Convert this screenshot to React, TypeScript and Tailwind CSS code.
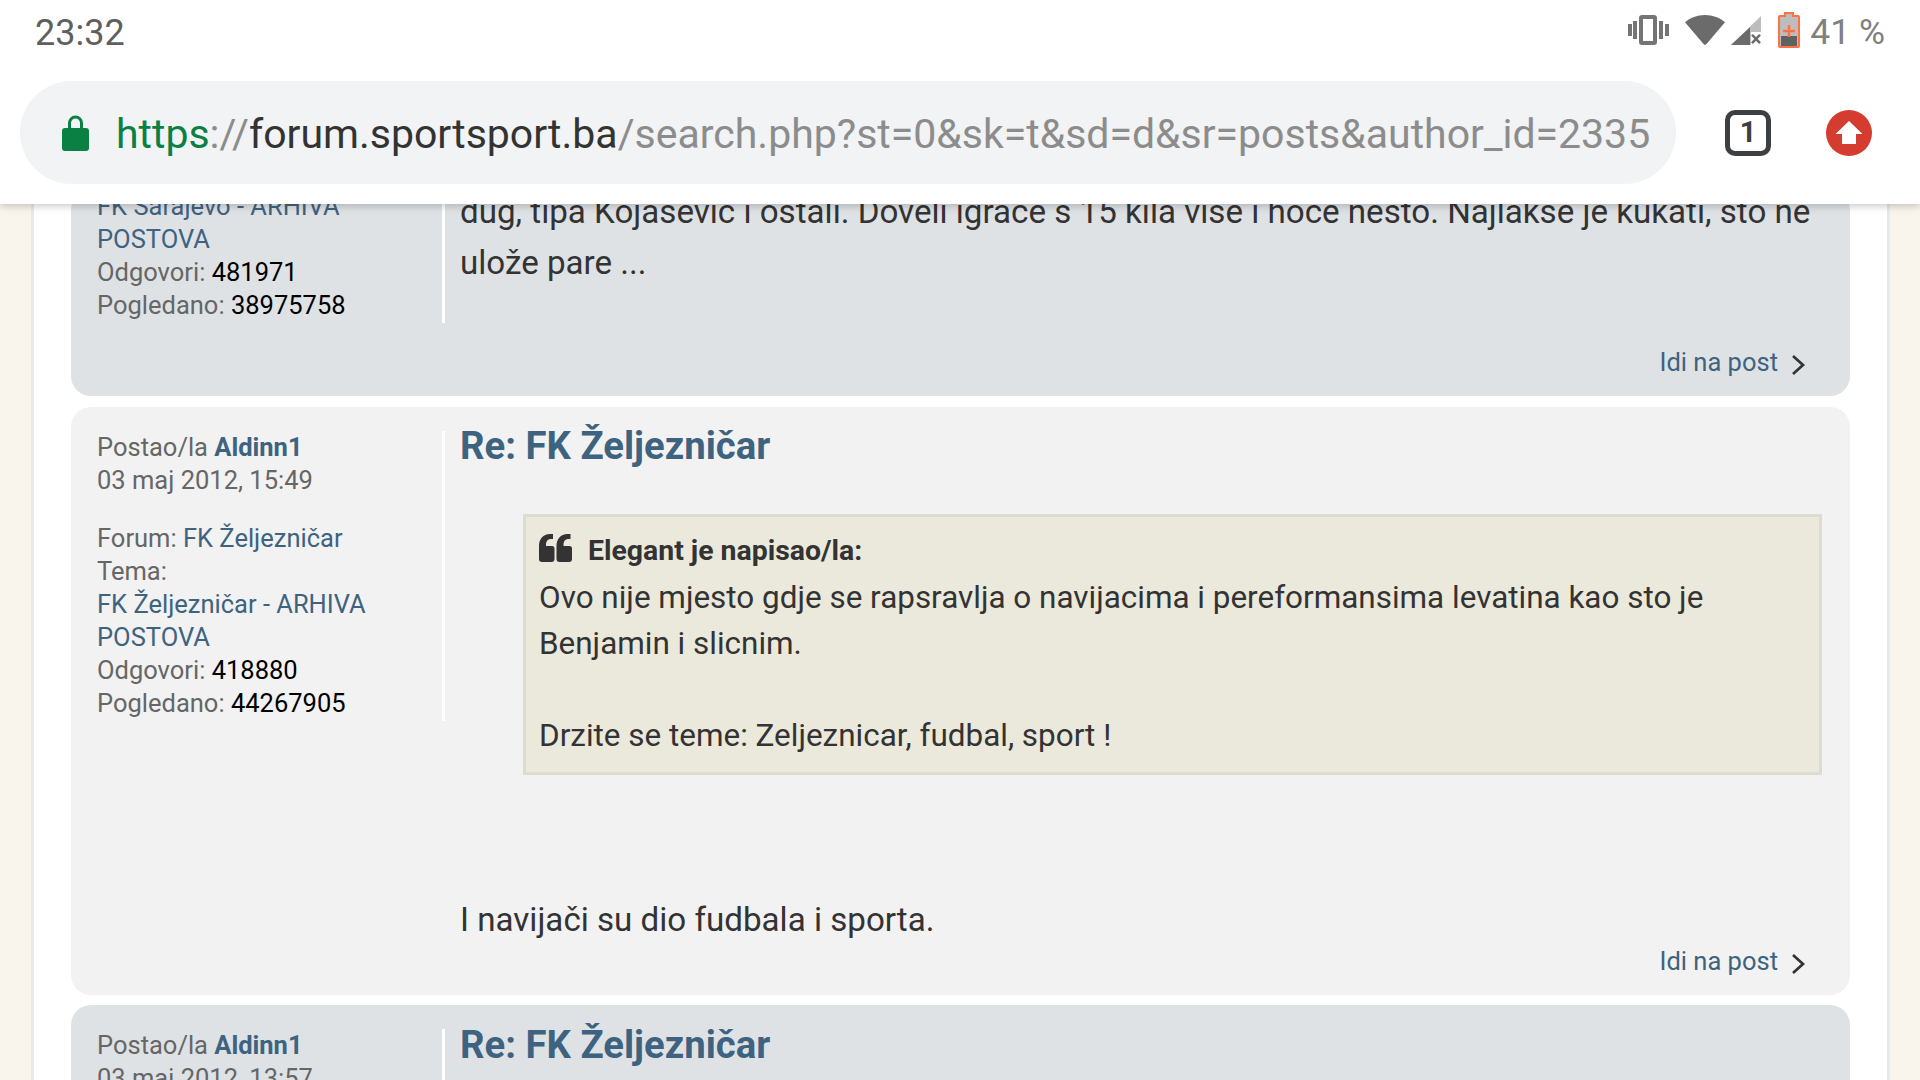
import type { ReactNode } from "react"

function VibrateIcon() {
  return (
    <svg width="41" height="30" viewBox="0 0 41 30" fill="#757575">
      <path fillRule="evenodd" d="M14 0h12a3 3 0 0 1 3 3v24a3 3 0 0 1-3 3H14a3 3 0 0 1-3-3V3a3 3 0 0 1 3-3zm1 4v22h10V4z" />
      <rect x="0" y="9" width="4" height="12" />
      <rect x="5" y="6" width="4" height="18" />
      <rect x="31" y="6" width="4" height="18" />
      <rect x="37" y="9" width="4" height="12" />
    </svg>
  )
}

function WifiIcon() {
  return (
    <svg width="40" height="31" viewBox="0 0 40 32" preserveAspectRatio="none" fill="#6b6b6b">
      <path d="M0 7.500C5 3 12 0 20 0s15 3 20 7.500L21.500 30a2 2 0 0 1-3 0z" />
    </svg>
  )
}

function SignalIcon() {
  return (
    <svg width="31" height="30" viewBox="0 0 31 32" preserveAspectRatio="none">
      <path d="M30 1v17H20v14H0z" fill="#bdbdbd" />
      <path d="M19 13v19H0z" fill="#6b6b6b" />
      <path d="M21 21l8 9m0-9l-8 9" stroke="#6b6b6b" strokeWidth="2.500" fill="none" />
    </svg>
  )
}

function BatteryIcon() {
  return (
    <svg width="22" height="36" viewBox="0 0 22 36">
      <path d="M7 1h8v3h5a1 1 0 0 1 1 1v29a1 1 0 0 1-1 1H2a1 1 0 0 1-1-1V5a1 1 0 0 1 1-1h5z" fill="#bdbdbd" stroke="#ff7043" strokeWidth="2" />
      <rect x="3" y="24" width="16" height="10" fill="#616161" />
      <path d="M5 19h12M11 13v12" stroke="#ff7043" strokeWidth="2.500" fill="none" />
    </svg>
  )
}

function LockIcon() {
  return (
    <svg width="27" height="36" viewBox="0 0 27 36" fill="#0b8043">
      <path fillRule="evenodd" d="M6 13V8a7.500 7.500 0 0 1 15 0v5h3a3 3 0 0 1 3 3v17a3 3 0 0 1-3 3H3a3 3 0 0 1-3-3V16a3 3 0 0 1 3-3zm3 0h9V8a4.500 4.500 0 0 0-9 0z" />
    </svg>
  )
}

function UploadBadge() {
  return (
    <svg width="46" height="46" viewBox="0 0 46 46">
      <circle cx="23" cy="23" r="23" fill="#d33c2e" />
      <path d="M23 11l13.500 13H30v10H16V24H9.500z" fill="#fff" />
    </svg>
  )
}

function QuoteIcon() {
  return (
    <svg width="33" height="28" viewBox="0 0 33 28" fill="#333333">
      <path d="M3 28a3 3 0 0 1-3-3V12C0 5 4 0 11 0h3v5h-2c-3 0-5 2-5 6v1h6a2.500 2.500 0 0 1 2.500 2.500V25a3 3 0 0 1-3 3z" />
      <path d="M3 28a3 3 0 0 1-3-3V12C0 5 4 0 11 0h3v5h-2c-3 0-5 2-5 6v1h6a2.500 2.500 0 0 1 2.500 2.500V25a3 3 0 0 1-3 3z" transform="translate(17.500 0)" />
    </svg>
  )
}

function PostLink({ className }: { className: string }) {
  return (
    <div className={`flex items-center justify-end pr-[44px] ${className}`}>
      <span className="text-[25.500px] leading-[33px] text-[#3d6380]">Idi na post</span>
      <svg className="ml-[13px] mt-[4px]" width="15" height="22" viewBox="0 0 15 22" fill="none" stroke="#333333" strokeWidth="2.700">
        <path d="M2 2l10 9-10 9" />
      </svg>
    </div>
  )
}

function Meta({ label, value }: { label: string; value: string }) {
  return (
    <div>
      {label}: <span className="text-black">{value}</span>
    </div>
  )
}

function Card({ tone, className, children }: { tone: "dark" | "light"; className: string; children: ReactNode }) {
  const bg = tone === "dark" ? "bg-[#dfe2e5]" : "bg-[#f2f2f2]"
  return <div className={`rounded-[20px] overflow-hidden ${bg} ${className}`}>{children}</div>
}

export default function App() {
  return (
    <div className="w-[1920px] h-[1080px] overflow-hidden flex flex-col bg-[#f9f4ec] font-['Roboto',sans-serif]">
      {/* Phone status bar + chrome toolbar */}
      <header className="relative z-10 h-[204px] shrink-0 bg-white shadow-[0_2px_8px_rgba(0,0,0,0.22)]">
        <div className="h-[65px] flex items-center justify-between pl-[35px] pr-[35px]">
          <span className="text-[36px] leading-none text-[#5f5f5f]">23:32</span>
          <div className="flex items-center mb-[5px]">
            <VibrateIcon />
            <div className="ml-[16px] flex"><WifiIcon /></div>
            <div className="ml-[6px] flex"><SignalIcon /></div>
            <div className="ml-[16px] flex"><BatteryIcon /></div>
            <span className="ml-[10px] mt-[5px] text-[35.500px] leading-none text-[#808080]">41 %</span>
          </div>
        </div>
        <div className="flex items-center mt-[16px] pl-[20px]">
          <div className="w-[1656px] h-[103px] rounded-full bg-[#f1f3f4] flex items-center pl-[42px]">
            <LockIcon />
            <div className="ml-[27px] mt-[4px] text-[41px] leading-none whitespace-nowrap text-[#8c8c8c]">
              <span className="text-[#0b8043]">https</span>://<span className="text-[#333333]">forum.sportsport.ba</span>/search.php?st=0&amp;sk=t&amp;sd=d&amp;sr=posts&amp;author_id=2335
            </div>
          </div>
          <div className="ml-[49px] w-[46px] h-[46px] rounded-[10px] border-[5px] border-[#3c4043] flex items-center justify-center text-[29px] font-bold text-[#3c4043]">
            1
          </div>
          <div className="ml-[55px]"><UploadBadge /></div>
        </div>
      </header>

      {/* Forum page behind the toolbar */}
      <main className="flex-1 min-h-0 ml-[31px] w-[1859px] border-x-[3px] border-[#e6e9ed] bg-white pl-[37px] pr-[37px]">
        <Card tone="dark" className="-mt-[14px] h-[206px] flex flex-col">
          <div className="flex h-[133px]">
            <div className="w-[371px] shrink-0 pl-[26px] text-[25.500px] leading-[33px] text-[#666666]">
              <div className="text-[#3d6380]">FK Sarajevo - ARHIVA</div>
              <div className="text-[#3d6380]">POSTOVA</div>
              <Meta label="Odgovori" value="481971" />
              <Meta label="Pogledano" value="38975758" />
            </div>
            <div className="w-[3px] shrink-0 bg-white" />
            <div className="pl-[15px] -mt-[4px] text-[33.150px] leading-[51px] text-[#333333] whitespace-nowrap">
              <div>dug, tipa Kojasevic i ostali. Doveli igrace s 15 kila vise i hoce nesto. Najlakse je kukati, sto ne</div>
              <div>ulože pare ...</div>
            </div>
          </div>
          <PostLink className="mt-[23px]" />
        </Card>

        <Card tone="light" className="mt-[11px] h-[588px] pt-[24px] flex flex-col">
          <div className="flex h-[506px]">
            <div className="w-[371px] shrink-0 pl-[26px] text-[25.500px] leading-[33px] text-[#666666]">
              <div>Postao/la <span className="font-bold text-[#3d6380]">Aldinn1</span></div>
              <div>03 maj 2012, 15:49</div>
              <div className="mt-[25px]">Forum: <span className="text-[#3d6380]">FK Željezničar</span></div>
              <div>Tema:</div>
              <div className="text-[#3d6380]">FK Željezničar - ARHIVA</div>
              <div className="text-[#3d6380]">POSTOVA</div>
              <Meta label="Odgovori" value="418880" />
              <Meta label="Pogledano" value="44267905" />
            </div>
            <div className="w-[3px] h-[290px] shrink-0 bg-white" />
            <div className="flex-1 pl-[15px] pr-[28px]">
              <h2 className="-mt-[5px] text-[38.300px] leading-[40px] font-bold text-[#3d6380]">Re: FK Željezničar</h2>
              <div className="mt-[48px] ml-[63px] h-[261px] border-[3px] border-[#dcdccf] bg-[#ebe9dc] pl-[13px] pt-[15px] text-[31.450px] leading-[46px] text-[#333333]">
                <div className="flex items-center h-[32px]">
                  <QuoteIcon />
                  <span className="ml-[16px] mt-[6px] text-[28.400px] font-bold">Elegant je napisao/la:</span>
                </div>
                <div className="mt-[11px]">Ovo nije mjesto gdje se rapsravlja o navijacima i pereformansima levatina kao sto je</div>
                <div>Benjamin i slicnim.</div>
                <div className="mt-[46px]">Drzite se teme: Zeljeznicar, fudbal, sport !</div>
              </div>
              <p className="mt-[120px] text-[33.150px] leading-[50px] text-[#333333]">I navijači su dio fudbala i sporta.</p>
            </div>
          </div>
          <PostLink className="mt-[8px]" />
        </Card>

        <Card tone="dark" className="mt-[10px] h-[140px] pt-[24px]">
          <div className="flex">
            <div className="w-[371px] shrink-0 pl-[26px] text-[25.500px] leading-[33px] text-[#666666]">
              <div>Postao/la <span className="font-bold text-[#3d6380]">Aldinn1</span></div>
              <div>03 maj 2012, 13:57</div>
            </div>
            <div className="w-[3px] h-[120px] shrink-0 bg-white" />
            <h2 className="pl-[15px] -mt-[4px] text-[38.300px] leading-[40px] font-bold text-[#3d6380]">Re: FK Željezničar</h2>
          </div>
        </Card>
      </main>
    </div>
  )
}
